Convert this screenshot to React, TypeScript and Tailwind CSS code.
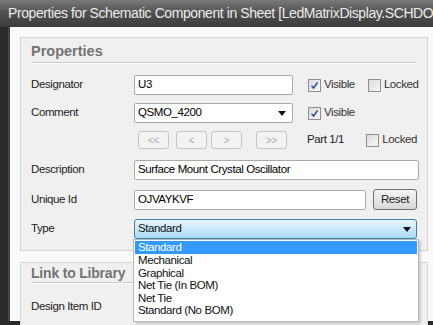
import React from "react";

const font = { fontFamily: '"Liberation Sans", Arial, sans-serif' };

function Check({ checked }: { checked?: boolean }) {
  return (
    <div className="w-[13px] h-[13px] border border-[#8f8f8f] bg-gradient-to-br from-[#dcdcdc] to-[#f7f7f7] flex items-center justify-center shrink-0">
      {checked && (
        <svg width="9" height="9" viewBox="0 0 9 9">
          <path d="M1.5 4.8 L3.6 7 L7.6 1.4" fill="none" stroke="#2b4fa8" strokeWidth="1.6" />
        </svg>
      )}
    </div>
  );
}

function Arrow() {
  return (
    <svg width="8" height="5" viewBox="0 0 8 5" className="shrink-0">
      <path d="M0 0 H8 L4 5 Z" fill="#111" />
    </svg>
  );
}

function Label({ children }: { children: React.ReactNode }) {
  return <div className="w-[103px] shrink-0 text-[#1e1e1e]">{children}</div>;
}

function Input({ value, w, arrow }: { value: string; w: string; arrow?: boolean }) {
  return (
    <div className={`${w} h-[20px] border border-[#a9a9a9] rounded-[2px] bg-white flex items-center justify-between pl-[3px] pr-[6px] shrink-0`}>
      <span>{value}</span>
      {arrow && <Arrow />}
    </div>
  );
}

function NavBtn({ t }: { t: string }) {
  return (
    <div className="w-[31px] h-[18px] border border-[#c4c4c4] rounded-[3px] bg-[#f3f3f3] flex items-center justify-center text-[#a8a8a8] text-[10px] shrink-0">
      {t}
    </div>
  );
}

export default function App() {
  const items = ["Mechanical", "Graphical", "Net Tie (In BOM)", "Net Tie", "Standard (No BOM)"];
  return (
    <div
      className="w-[433px] h-[325px] overflow-hidden relative bg-[#2a2a2a] text-[11.5px] tracking-[-0.4px]"
      style={font}
    >
      <div className="h-[27px] bg-gradient-to-b from-[#7a7a7a] via-[#4f4f4f] to-[#3c3c3c] flex items-center pl-[8px] text-[#ececec] text-[14px] tracking-[-0.42px] whitespace-nowrap">
        Properties for Schematic Component in Sheet [LedMatrixDisplay.SCHDOC
      </div>
      <div className="ml-[8px] h-[294px] border-l-2 border-[#444] bg-[#f9f9f9] pt-[10px] pl-[10px]">
        <div className="w-[408px] border border-[#d6d6d6] bg-[#f0f0f0] px-[10px] pt-[6px] pb-[11px]">
          <div className="text-[14.5px] font-bold text-[#737373] tracking-[0px] leading-[15px]">Properties</div>
          <div className="mt-[3px] h-[2px] border-t border-[#c9c9c9] bg-white" />
          <div className="mt-[11px] flex items-center">
            <Label>Designator</Label>
            <Input value="U3" w="w-[159px]" />
            <div className="ml-[15px] flex items-center gap-[3px]">
              <Check checked /> <span className="text-[#333]">Visible</span>
            </div>
            <div className="ml-[13px] flex items-center gap-[3px]">
              <Check /> <span className="text-[#333]">Locked</span>
            </div>
          </div>
          <div className="mt-[8px] flex items-center">
            <Label>Comment</Label>
            <Input value="QSMO_4200" w="w-[159px]" arrow />
            <div className="ml-[15px] flex items-center gap-[3px]">
              <Check checked /> <span className="text-[#333]">Visible</span>
            </div>
          </div>
          <div className="mt-[8px] flex items-center">
            <div className="w-[107px] shrink-0" />
            <NavBtn t="<<" />
            <div className="ml-[7px]"><NavBtn t="<" /></div>
            <div className="ml-[4px]"><NavBtn t=">" /></div>
            <div className="ml-[14px]"><NavBtn t=">>" /></div>
            <span className="ml-[20px] text-[#222] w-[62px]">Part 1/1</span>
            <div className="flex items-center gap-[3px]">
              <Check /> <span className="text-[#333]">Locked</span>
            </div>
          </div>
          <div className="mt-[11px] flex items-center">
            <Label>Description</Label>
            <Input value="Surface Mount Crystal Oscillator" w="w-[285px]" />
          </div>
          <div className="mt-[9px] flex items-center">
            <Label>Unique Id</Label>
            <Input value="OJVAYKVF" w="w-[232px]" />
            <div className="ml-[7px] w-[46px] h-[21px] border border-[#707070] rounded-[3px] bg-gradient-to-b from-[#f4f4f4] to-[#d9d9d9] flex items-center justify-center text-[#222]">
              Reset
            </div>
          </div>
          <div className="mt-[9px] flex items-center">
            <Label>Type</Label>
            <div className="w-[285px] h-[20px] border border-[#3c7fb1] rounded-[3px] bg-gradient-to-b from-[#eaf6fd] to-[#a9dbf6] flex items-center justify-between pl-[3px] pr-[5px]">
              <span className="text-[#111]">Standard</span>
              <Arrow />
            </div>
          </div>
        </div>
        <div className="mt-[11px] w-[408px] h-[80px] border border-[#d6d6d6] bg-[#f0f0f0] px-[10px] pt-[3px]">
          <div className="text-[14px] font-bold text-[#737373] tracking-[-0.2px] leading-[15px]">Link to Library</div>
          <div className="mt-[1px] h-[2px] border-t border-[#c9c9c9] bg-white" />
          <div className="mt-[15px] leading-[14px] text-[#1e1e1e]">Design Item ID</div>
        </div>
      </div>
      <div className="absolute left-[133px] top-[239px] w-[286px] h-[83px] border border-[#b8b8b8] bg-white pt-[1px] px-[1px] shadow-[2px_2px_2px_rgba(0,0,0,0.15)]">
        <div className="h-[13px] bg-[#3399ff] text-white pl-[3px] leading-[13px]">Standard</div>
        {items.map((it) => (
          <div key={it} className="pl-[3px] text-[#111] h-[12.5px] leading-[13px] first:mt-[3px]">
            {it}
          </div>
        ))}
      </div>
    </div>
  );
}
